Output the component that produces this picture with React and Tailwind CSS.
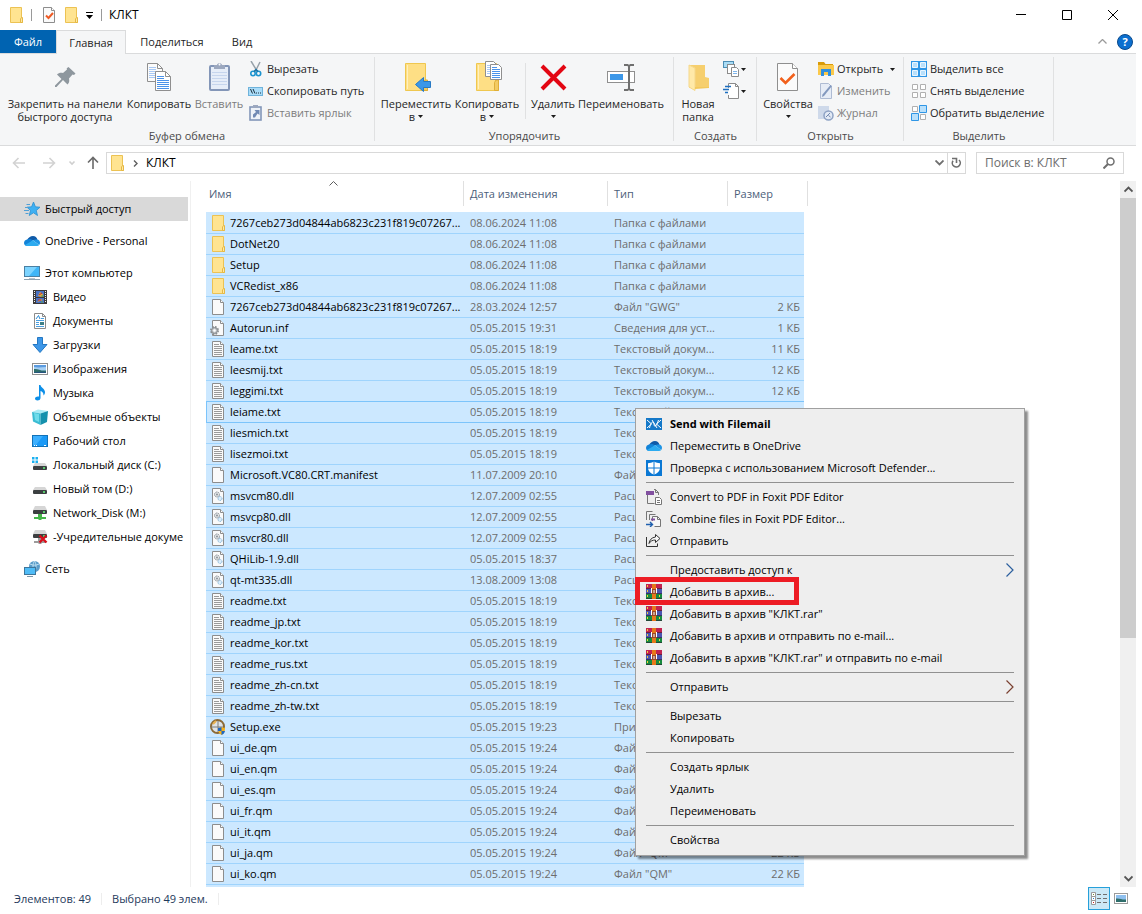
import { useState } from 'react';

const Svg = ({ size = 16, className = '', children }) => (
  <svg width={size} height={size} viewBox={`0 0 ${size} ${size}`} fill="none" aria-hidden="true" className={`shrink-0 ${className}`}>
    {children}
  </svg>
);

/* ---------- file icons ---------- */

const FolderIcon = () => (
  <Svg>
    <path d="M2.500 .5h11v11h1v4h-12z" fill="#ffe491" stroke="#ecc253" />
    <path d="M12.500 15.500v-3.500l1-1.500h1v5z" fill="#ffe9a6" stroke="#e5b844" />
  </Svg>
);

const Page = ({ children }) => (
  <Svg>
    <path d="M2.500 .5h8l3 3v12h-11z" fill="#fafafa" stroke="#8d8d8d" />
    <path d="M10.500 .5v3h3" fill="#fff" stroke="#8d8d8d" />
    {children}
  </Svg>
);

const FileIcon = () => <Page />;

const TextIcon = () => (
  <Page>
    <path d="M4 3.500h5M4 5.500h8M4 7.500h8M4 9.500h8M4 11.500h8M4 13.500h8" stroke="#9a9a9a" />
  </Page>
);

const InfIcon = () => (
  <Page>
    <circle cx="4.500" cy="10.500" r="3.500" fill="#c9cdd0" stroke="#8a8e91" strokeWidth="2" strokeDasharray="1.600 1.150" />
    <circle cx="4.500" cy="10.500" r="2.800" fill="#c9cdd0" stroke="#8a8e91" />
    <circle cx="4.500" cy="10.500" r="1.200" fill="#fff" />
  </Page>
);

const DllIcon = () => (
  <Page>
    <circle cx="7" cy="6.500" r="2.500" fill="#e3e6e8" stroke="#8b9297" strokeDasharray="1.500 .6" />
    <circle cx="7" cy="6.500" r="1" fill="#8b9297" />
    <circle cx="10" cy="10.500" r="2" fill="#dceefb" stroke="#7fb2d6" strokeDasharray="1.200 .6" />
  </Page>
);

const SetupIcon = () => (
  <Svg>
    <circle cx="7.500" cy="7.500" r="6.500" fill="#dfe3e6" stroke="#8c6a37" strokeWidth="2" />
    <path d="M1 8h12M8 2v11" stroke="#7c7c7c" />
    <path d="M3 5l3-3" stroke="#e9b04e" strokeWidth="2" />
    <path d="M8 9c2 0 3-1 3.500-1s1.500 1 3.500 1c0 4-1.500 6-3.500 7-2-1-3.500-3-3.500-7z" fill="#f6b21b" />
    <path d="M11.500 8v4H8c0-1 0-2 0-3 2 0 3-1 3.500-1zM11.500 12H15c-.5 2-1.500 3.300-3.500 4z" fill="#1f66c1" />
  </Svg>
);

/* ---------- sidebar icons ---------- */

const StarIcon = () => (
  <Svg>
    <path d="M9.500 1l1.900 4.800 4.600.4-3.700 3.300 1.200 5-4-2.700-4.300 2.700 1.300-5-3.500-3.300 4.600-.4z" fill="#3fb0f2" stroke="#2b8fd0" strokeWidth=".8" />
    <path d="M2.500 3.500H6M1 6.500h3M0 9.500h5M1.500 12.500h3" stroke="#4f9fd6" />
  </Svg>
);

const CloudIcon = () => (
  <Svg>
    <path d="M3 7.500C4 4.500 6.500 3 9 3c2.200 0 4 1.500 4.500 4z" fill="#0f5aa8" />
    <path d="M3 6.500c2-1.200 4.500-.5 6 .8L3.500 13C1.500 13 0 11.800 0 10c0-2 1.500-3.200 3-3.500z" fill="#1283d8" />
    <path d="M13 6.500c1.800.2 3 1.500 3 3.300 0 1-.3 1.700-.8 2.200L9 7.300c1-.8 2.500-1 4-.8z" fill="#1d94e5" />
    <path d="M9 7.300l6.200 4.700c-.5.600-1.200 1-2.200 1H3.500c-1 0-1.900-.4-2.500-1z" fill="#2cabf0" />
  </Svg>
);

const ComputerIcon = () => (
  <Svg>
    <rect x=".5" y="1.500" width="15" height="10" fill="#3fb6f8" stroke="#4a80a3" />
    <path d="M1 2h12l-8 9H1z" fill="#7dd4ff" />
    <path d="M5 13.500h6" stroke="#b6c4cf" />
    <path d="M0 14.500h16" stroke="#8fa3b1" />
  </Svg>
);

const VideoIcon = () => (
  <Svg>
    <rect x="1" y="1" width="14" height="14" fill="#3d3a3a" />
    <path d="M2.500 2v12M13.500 2v12" stroke="#f2f2f2" strokeDasharray="1 1" />
    <rect x="4" y="2" width="8" height="6" fill="#4a72c4" />
    <rect x="4" y="9" width="8" height="5" fill="#4a72c4" />
    <path d="M6 7l2-4 3 2-1 3zM5 13l3-3 3 1" fill="#e8a33a" />
    <path d="M7 6l3-2M6 11h3" stroke="#b5323a" />
    <path d="M9 7h3M9 13h2" stroke="#58a846" />
  </Svg>
);

const DocumentsIcon = () => (
  <Svg>
    <path d="M2.500 .5h8l3 3v12h-11z" fill="#fff" stroke="#8b8b8b" />
    <path d="M10.500 .5v3h3" stroke="#8b8b8b" />
    <path d="M4 6l2.500-3.500L8 6" stroke="#2a8ad4" />
    <path d="M4 7.500h8M4 9.500h3M4 11.500h3M4 13.500h8M9 5.500h3" stroke="#4a9fe0" />
    <rect x="8" y="9" width="4" height="3" fill="#3f7f86" />
  </Svg>
);

const DownloadsIcon = () => (
  <Svg>
    <path d="M5.500 .5h5v7h4.500L8 15.500 1 7.500h4.500z" fill="#3d97e8" stroke="#2377c2" />
  </Svg>
);

const PictureIcon = () => (
  <Svg>
    <rect x=".5" y="2.500" width="15" height="11" fill="#fff" stroke="#8f8f8f" />
    <rect x="2" y="4" width="12" height="8" fill="#a7d0f4" />
    <path d="M2 4h12v2c-4 0-7 1-12 0z" fill="#5b9be0" />
    <path d="M2 8c4-.5 6 2 12 1.500V12H2z" fill="#2f6e6b" />
    <path d="M2 11.500c4-1 8-1 12-.5v1H2z" fill="#27547f" />
  </Svg>
);

const MusicIcon = () => (
  <Svg>
    <path d="M7 0h1.500c.3 2.500 4.500 3.800 4.500 7 0 1.500-.5 2.800-1.500 3.500.3-2.500-1.300-4-3-4.500v7c0 1.700-1.500 2.500-3 2.500S3 14.700 3 13.500 4.500 11 7 11.500z" fill="#0c8fe8" />
  </Svg>
);

const CubeIcon = () => (
  <Svg>
    <path d="M0 3l6-2.500 10 1.500-7.500 2.500z" fill="#a8ebf5" />
    <path d="M0 3l8.500 1.500V16L1 12.500z" fill="#3bbcd3" />
    <path d="M8.500 4.500L16 2l-1 11-6.500 3z" fill="#1591ad" />
    <path d="M2 4l5 1v8l-4-2z" fill="#6fdcea" />
  </Svg>
);

const DesktopIcon = () => (
  <Svg>
    <rect x=".5" y="2.500" width="15" height="11" fill="#1b9af7" stroke="#1272b8" />
    <path d="M1 3h10L4 12H1z" fill="#3db0ff" />
    <path d="M2 12.500h1M4 12.500h1M12 12.500h2" stroke="#fff" />
  </Svg>
);

const Drive = ({ children }) => (
  <Svg>
    <path d="M3 6h10l2 3H1z" fill="#d6d6d6" />
    <rect x="1" y="9" width="14" height="4" rx="1" fill="#3c3f41" />
    <rect x="11" y="10" width="2" height="2" fill="#57c86b" />
    {children}
  </Svg>
);

const SystemDriveIcon = () => (
  <Drive>
    <path d="M0 0h2.500v2.500H0zM3.500 0H6v2.500H3.500zM0 3.500h2.500V6H0zM3.500 3.500H6V6H3.500z" fill="#1bb0f0" />
  </Drive>
);

const NetDrive = ({ children, pipe }) => (
  <Svg>
    <path d="M3 1h10l2 4H1z" fill="#d6d6d6" />
    <rect x="1" y="5" width="14" height="4" rx="1" fill="#3c3f41" />
    <rect x="11" y="6" width="2" height="2" fill="#57c86b" />
    <path d="M6 9h4v3h4v2h-4l-1 1H7l-1-1H2v-2h4z" fill={pipe} />
    {children}
  </Svg>
);

const NetDriveIcon = () => <NetDrive pipe="#45b649" />;

const BrokenDriveIcon = () => (
  <NetDrive pipe="#9c9c9c">
    <path d="M7.500 6.500l7 7M14.500 6.500l-7 7" stroke="#d80f1b" strokeWidth="2.400" />
  </NetDrive>
);

const NetworkIcon = () => (
  <Svg>
    <circle cx="10.500" cy="5.500" r="5.500" fill="#5b9cc9" />
    <path d="M6 3c3 1.500 6 1.500 9 0M10.500 0c-2 3-2 7 0 11M10.500 0c2 3 2 7 0 11" stroke="#bfe0f2" />
    <rect x=".5" y="6.500" width="11" height="7" fill="#4fbcf7" stroke="#3e769b" />
    <path d="M3 15.500h6" stroke="#7d97a8" />
  </Svg>
);

/* ---------- ribbon icons ---------- */

const PinIcon = () => (
  <Svg size={32}>
    <path d="M19.500 6l7 6.500-1.500 1.500-1.500-.5-3.500 4c.6 2.500.2 4.500-1.500 6L14 19l-6.500 7H6v-1.500L12.500 18 8 13.500c1.500-1.500 3.500-2 6-1.500l4-3.500-.3-1.300z" fill="#8e979e" />
  </Svg>
);

const CopyIcon = () => (
  <Svg size={32}>
    <path d="M4.500 2.500h10l5 5v13h-15z" fill="#fbfbfb" stroke="#8f8f8f" />
    <path d="M14.500 2.500v5h5" stroke="#8f8f8f" />
    <path d="M6 6.500h7M6 8.500h7M6 10.500h11M6 12.500h11M6 14.500h11M6 16.500h11" stroke="#a8c9f5" />
    <path d="M12.500 10.500h10l5 5v14h-15z" fill="#fff" stroke="#8f8f8f" />
    <path d="M22.500 10.500v5h5" stroke="#8f8f8f" />
    <path d="M14 15.500h7M14 17.500h7M14 19.500h12M14 21.500h12M14 23.500h12M14 25.500h12M14 27.500h12" stroke="#4b93ea" />
  </Svg>
);

const PasteIcon = () => (
  <Svg size={32}>
    <rect x="7" y="5" width="19" height="24" rx="1" fill="#e6edf8" stroke="#8396b8" strokeWidth="2" />
    <path d="M9 11.500h15M9 14.500h15M9 17.500h15M9 20.500h15M9 23.500h15" stroke="#c6d5ed" />
    <path d="M11 4h3c0-2.500 5-2.500 5 0h3v4H11z" fill="#9ca8bf" />
    <circle cx="16.500" cy="3.500" r="1" fill="#fff" />
  </Svg>
);

const ScissorsIcon = () => (
  <Svg>
    <path d="M3 0l6 10M12 1L7 11" stroke="#98a2aa" strokeWidth="1.500" />
    <circle cx="5" cy="12.500" r="2.200" stroke="#1c94cf" strokeWidth="1.600" />
    <circle cx="10.500" cy="12.500" r="2.200" stroke="#1c94cf" strokeWidth="1.600" />
    <path d="M6 10.500l2-2 2 2" stroke="#1672a5" strokeWidth="1.500" />
  </Svg>
);

const PathIcon = () => (
  <Svg>
    <rect x=".5" y="4.500" width="14" height="8" fill="#a9dcf9" stroke="#6fb3db" />
    <path d="M2.500 6l2 4.500M5 6l2 4.500" stroke="#1b2f3d" />
    <path d="M8 10h1M10 10h1M12 10h1" stroke="#1b2f3d" />
  </Svg>
);

const PasteLinkIcon = () => (
  <Svg>
    <rect x="2" y="2" width="11" height="13" fill="#eef2f8" stroke="#8396b8" strokeWidth="1.600" />
    <rect x="5" y="0" width="5" height="3" fill="#9ca8bf" />
    <path d="M5 12.500V9.500L8 7 6.500 5H11.500V10L9.500 8.500 7 12.500z" fill="#7089b3" />
  </Svg>
);

const BigFolder = () => (
  <>
    <path d="M5.500 2.500h20v17h2v10h-22z" fill="#fedf85" stroke="#efc74f" />
    <path d="M7.500 4v24" stroke="#fff0bd" />
    <path d="M23.500 29.500v-8l1.500-2.500h2.500v10.500z" fill="#f3cb63" stroke="#dfae38" />
  </>
);

const MoveToIcon = () => (
  <Svg size={32}>
    <BigFolder />
    <path d="M15.500 23.500l8-7v4h7v6h-7v4z" fill="#3c97e8" stroke="#2779c4" />
  </Svg>
);

const CopyToIcon = () => (
  <Svg size={32}>
    <BigFolder />
    <path d="M14.500 .5h8l3 3v12h-11z" fill="#fff" stroke="#8f8f8f" />
    <path d="M16 4.500h5M16 6.500h5M16 8.500h5M16 10.500h5M16 12.500h5" stroke="#a8c9f5" />
    <path d="M19.500 3.500h8l3 3v12h-11z" fill="#fff" stroke="#8f8f8f" />
    <path d="M21 6.500h5M21 8.500h8M21 10.500h8M21 12.500h8M21 14.500h8M21 16.500h8" stroke="#4b93ea" />
  </Svg>
);

const DeleteIcon = () => (
  <Svg size={32}>
    <path d="M5 5l23 23M28 5L5 28" stroke="#e30613" strokeWidth="4" />
  </Svg>
);

const RenameIcon = () => (
  <Svg size={32}>
    <rect x="2.500" y="10.500" width="27" height="11" fill="#fff" stroke="#8f8f8f" />
    <rect x="5" y="13" width="13" height="6" fill="#3c97e8" />
    <path d="M19 4h3.500l1.500 1 1.500-1H29M19 29h3.500l1.500-1 1.500 1H29M24 5v23" stroke="#6f6f6f" strokeWidth="2" />
  </Svg>
);

const NewFolderIcon = () => (
  <Svg size={32}>
    <path d="M7 4h16v12l4 1v9l-3 1H7z" fill="#f6cf6e" />
    <path d="M7 4l6 3v22.500L7 26z" fill="#ffe9a8" stroke="#f5d88b" />
    <path d="M13 26h14v1l-14 1z" fill="#f3c85c" />
  </Svg>
);

const NewItemIcon = () => (
  <Svg>
    <rect x=".5" y=".5" width="10" height="6" fill="#a9dcf5" stroke="#4c8db4" />
    <rect x="4.500" y="3.500" width="7" height="9" fill="#fff" stroke="#8b8b8b" />
    <path d="M8.500 6.500h5l2 2v7h-7z" fill="#fff" stroke="#8b8b8b" />
    <path d="M10 10.500h4M10 12.500h4" stroke="#7db4ea" />
  </Svg>
);

const EasyAccessIcon = () => (
  <Svg>
    <path d="M5.500 5V.5h7l3 3v12h-10V12" fill="#fff" stroke="#8b8b8b" />
    <path d="M12.500 .5v3h3" stroke="#8b8b8b" />
    <path d="M2 3.500h6M0 6.500h6M2 9.500h3" stroke="#1e6fc0" strokeWidth="1.500" />
  </Svg>
);

const PropertiesIcon = () => (
  <Svg size={32}>
    <path d="M5.500 2.500h15l5 5v22h-20z" fill="#fbfbfb" stroke="#8f8f8f" />
    <path d="M20.500 2.500v5h5" fill="#fff" stroke="#8f8f8f" />
    <path d="M8.500 17l5 5 9-9" stroke="#f2611c" strokeWidth="2.600" />
  </Svg>
);

const OpenIcon = () => (
  <Svg>
    <path d="M0 1h6l1.500 2H15v3H0z" fill="#d99b08" />
    <path d="M0 4h16v10H0z" fill="#fbc94b" />
    <path d="M3 15V8h10v7h-3v-4H6v4z" fill="#2f8fe0" />
  </Svg>
);

const EditIcon = () => (
  <Svg>
    <path d="M2.500 .5h8l3 3v12h-11z" fill="#e6ecf6" stroke="#aebbd3" />
    <path d="M14 3l-8 10-2 1 .5-2.500 8-9.500z" fill="#8298be" />
  </Svg>
);

const HistoryIcon = () => (
  <Svg>
    <path d="M0 1h11v13H0z" fill="#ced9ea" />
    <circle cx="10.500" cy="10.500" r="4.500" fill="#e3eaf5" stroke="#8ea2c4" strokeWidth="1.500" />
    <path d="M8 12l4-4M10.500 10.500l2 1.500" stroke="#7087ae" />
  </Svg>
);

const SelectAllIcon = () => (
  <Svg>
    <rect width="16" height="16" fill="#2f96e6" />
    <path d="M1.500 1.500h5v5h-5zM9.500 1.500h5v5h-5zM1.500 9.500h5v5h-5zM9.500 9.500h5v5h-5z" fill="#b9e0fb" stroke="#eaf6ff" />
  </Svg>
);

const SelectNoneIcon = () => (
  <Svg>
    <path d="M1.500 1.500h5v5h-5zM9.500 1.500h5v5h-5zM1.500 9.500h5v5h-5zM9.500 9.500h5v5h-5z" fill="#fff" stroke="#b0b0b0" />
  </Svg>
);

const InvertIcon = () => (
  <Svg>
    <path d="M1.500 1.500h5v5h-5zM9.500 9.500h5v5h-5z" fill="#fff" stroke="#b0b0b0" />
    <path d="M8.500 .5h7v7h-7zM.5 8.500h7v7h-7z" fill="#b9e0fb" stroke="#2f96e6" />
  </Svg>
);

const TickPageIcon = () => (
  <Page>
    <path d="M5 8.500l2.500 2.500L12 6" stroke="#ee5a24" strokeWidth="2" />
  </Page>
);

const Caret = () => (
  <svg width="5" height="3" viewBox="0 0 5 3" aria-hidden="true" className="inline-block shrink-0">
    <path d="M0 0h5L2.500 3z" fill="#1c1c1c" />
  </svg>
);

/* ---------- context menu icons ---------- */

const FilemailIcon = () => (
  <Svg>
    <rect y="2" width="16" height="12" fill="#1478c8" />
    <path d="M1 4l4.500 4L1 12M15 4l-4.500 4 4.500 4" stroke="#fff" />
    <path d="M3.500 12c1.500-6 4-8 4.500-4s2 3 4.500-4M6 4l5 8" stroke="#fff" />
  </Svg>
);

const DefenderIcon = () => (
  <Svg>
    <rect width="16" height="16" fill="#0a78d4" />
    <path d="M8 1.500c2 1.200 4 1.700 6 1.700V8c0 3-2.500 5.200-6 6.700C4.500 13.200 2 11 2 8V3.200c2 0 4-.5 6-1.700z" fill="#fff" />
    <path d="M8 1v14M1 8h14" stroke="#0a78d4" />
  </Svg>
);

const ConvertIcon = () => (
  <Svg>
    <path d="M1.500 6v8.500h7M8 .5h1.500l3 3V6" stroke="#767676" />
    <rect y="2" width="8" height="4" fill="#8250a0" />
    <path d="M9.500 .5v3h3" stroke="#767676" />
    <path d="M9.500 8.500h4l2 2v5h-6z" fill="#fff" stroke="#767676" />
    <path d="M11 11.500h3M11 13.500h3" stroke="#767676" />
  </Svg>
);

const CombineIcon = () => (
  <Svg>
    <path d="M.5 9V.5h6M3.500 9V3.500h6" stroke="#767676" />
    <path d="M6.500 10V5.500h5l3 3v7h-6" fill="#f7f7f7" stroke="#767676" />
    <path d="M11.500 5.500v3h3" stroke="#767676" />
    <path d="M5 8.500h4" stroke="#8250a0" strokeWidth="2" />
    <path d="M0 13.500h6M4 11l2.500 2.500L4 16" stroke="#1f5fae" strokeWidth="1.400" />
  </Svg>
);

const ShareIcon = () => (
  <Svg>
    <path d="M.5 4v9.500h11v-3" stroke="#333" />
    <path d="M9.500 1.500l4.500 4-4.500 4V7c-3 0-5 1-6.500 3.500C3.500 7 5.500 4.500 9.500 4z" fill="#f8f8f8" stroke="#333" />
  </Svg>
);

const RarIcon = () => (
  <Svg>
    <rect y="0" width="16" height="5" fill="#c22350" />
    <rect y="5" width="16" height="5" fill="#4a55b0" />
    <rect y="10" width="16" height="5" fill="#178a3d" />
    <path d="M0 4.500h16M0 9.500h16M0 14.500h16" stroke="#2b1d33" strokeOpacity=".6" />
    <path d="M1.500 1v2M1.500 6v2M1.500 11v2M13.500 11v2" stroke="#f1cf3b" />
    <rect x="6" width="4" height="15" fill="#e8781a" />
    <rect x="5" y="5" width="6" height="5" fill="#9a4a2a" />
    <path d="M5.500 4v5M8 6v3M10.500 4v5" stroke="#fff" />
  </Svg>
);

/* ---------- data ---------- */

const FOLDER = 'Папка с файлами';
const TXT = 'Текстовый докум...';
const DLL = 'Расширение при...';
const QM = 'Файл "QM"';

const files = [
  ['7267ceb273d04844ab6823c231f819c07267...', '08.06.2024 11:08', FOLDER, '', FolderIcon],
  ['DotNet20', '08.06.2024 11:08', FOLDER, '', FolderIcon],
  ['Setup', '08.06.2024 11:08', FOLDER, '', FolderIcon],
  ['VCRedist_x86', '08.06.2024 11:08', FOLDER, '', FolderIcon],
  ['7267ceb273d04844ab6823c231f819c07267...', '28.03.2024 12:57', 'Файл "GWG"', '2 КБ', FileIcon],
  ['Autorun.inf', '05.05.2015 19:31', 'Сведения для уст...', '1 КБ', InfIcon],
  ['leame.txt', '05.05.2015 18:19', TXT, '11 КБ', TextIcon],
  ['leesmij.txt', '05.05.2015 18:19', TXT, '12 КБ', TextIcon],
  ['leggimi.txt', '05.05.2015 18:19', TXT, '12 КБ', TextIcon],
  ['leiame.txt', '05.05.2015 18:19', TXT, '11 КБ', TextIcon],
  ['liesmich.txt', '05.05.2015 18:19', TXT, '12 КБ', TextIcon],
  ['lisezmoi.txt', '05.05.2015 18:19', TXT, '12 КБ', TextIcon],
  ['Microsoft.VC80.CRT.manifest', '11.07.2009 20:10', 'Файл "MANIFEST"', '1 КБ', FileIcon],
  ['msvcm80.dll', '12.07.2009 02:55', DLL, '468 КБ', DllIcon],
  ['msvcp80.dll', '12.07.2009 02:55', DLL, '536 КБ', DllIcon],
  ['msvcr80.dll', '12.07.2009 02:55', DLL, '612 КБ', DllIcon],
  ['QHiLib-1.9.dll', '05.05.2015 18:37', DLL, '320 КБ', DllIcon],
  ['qt-mt335.dll', '13.08.2009 13:08', DLL, '5 120 КБ', DllIcon],
  ['readme.txt', '05.05.2015 18:19', TXT, '11 КБ', TextIcon],
  ['readme_jp.txt', '05.05.2015 18:19', TXT, '12 КБ', TextIcon],
  ['readme_kor.txt', '05.05.2015 18:19', TXT, '12 КБ', TextIcon],
  ['readme_rus.txt', '05.05.2015 18:19', TXT, '12 КБ', TextIcon],
  ['readme_zh-cn.txt', '05.05.2015 18:19', TXT, '10 КБ', TextIcon],
  ['readme_zh-tw.txt', '05.05.2015 18:19', TXT, '10 КБ', TextIcon],
  ['Setup.exe', '05.05.2015 19:23', 'Приложение', '900 КБ', SetupIcon],
  ['ui_de.qm', '05.05.2015 19:24', QM, '22 КБ', FileIcon],
  ['ui_en.qm', '05.05.2015 19:24', QM, '22 КБ', FileIcon],
  ['ui_es.qm', '05.05.2015 19:24', QM, '22 КБ', FileIcon],
  ['ui_fr.qm', '05.05.2015 19:24', QM, '22 КБ', FileIcon],
  ['ui_it.qm', '05.05.2015 19:24', QM, '22 КБ', FileIcon],
  ['ui_ja.qm', '05.05.2015 19:24', QM, '22 КБ', FileIcon],
  ['ui_ko.qm', '05.05.2015 19:24', QM, '22 КБ', FileIcon],
  ['', '', '', '', FileIcon],
];

const sidebar = [
  { label: 'Быстрый доступ', icon: StarIcon, active: true },
  { label: 'OneDrive - Personal', icon: CloudIcon },
  {
    label: 'Этот компьютер',
    icon: ComputerIcon,
    children: [
      ['Видео', VideoIcon],
      ['Документы', DocumentsIcon],
      ['Загрузки', DownloadsIcon],
      ['Изображения', PictureIcon],
      ['Музыка', MusicIcon],
      ['Объемные объекты', CubeIcon],
      ['Рабочий стол', DesktopIcon],
      ['Локальный диск (C:)', SystemDriveIcon],
      ['Новый том (D:)', Drive],
      ['Network_Disk (M:)', NetDriveIcon],
      ['-Учредительные докуме', BrokenDriveIcon],
    ],
  },
  { label: 'Сеть', icon: NetworkIcon },
];

const menu = [
  [
    { label: 'Send with Filemail', icon: FilemailIcon, bold: true },
    { label: 'Переместить в OneDrive', icon: CloudIcon },
    { label: 'Проверка с использованием Microsoft Defender...', icon: DefenderIcon },
  ],
  [
    { label: 'Convert to PDF in Foxit PDF Editor', icon: ConvertIcon },
    { label: 'Combine files in Foxit PDF Editor...', icon: CombineIcon },
    { label: 'Отправить', icon: ShareIcon },
  ],
  [
    { label: 'Предоставить доступ к', sub: '#2b5f9e' },
    { label: 'Добавить в архив...', icon: RarIcon, marked: true },
    { label: 'Добавить в архив "КЛКТ.rar"', icon: RarIcon },
    { label: 'Добавить в архив и отправить по e-mail...', icon: RarIcon },
    { label: 'Добавить в архив "КЛКТ.rar" и отправить по e-mail', icon: RarIcon },
  ],
  [{ label: 'Отправить', sub: '#7a4030' }],
  [{ label: 'Вырезать' }, { label: 'Копировать' }],
  [{ label: 'Создать ярлык' }, { label: 'Удалить' }, { label: 'Переименовать' }],
  [{ label: 'Свойства' }],
];

/* ---------- parts ---------- */

const TitleBar = () => (
  <header className="flex h-[30px] shrink-0 items-center pl-2">
    <FolderIcon />
    <span className="ml-[7px] h-3 w-px bg-[#9a9a9a]" />
    <button type="button" aria-label="Свойства" className="ml-[9px]"><TickPageIcon /></button>
    <button type="button" aria-label="Новая папка" className="ml-[6px]"><FolderIcon /></button>
    <button type="button" aria-label="Настройка панели" className="ml-[7px] flex w-[7px] flex-col items-center gap-[2px]">
      <span className="h-px w-[7px] bg-black" />
      <svg width="7" height="4" viewBox="0 0 7 4" aria-hidden="true"><path d="M0 0h7L3.500 4z" fill="#000" /></svg>
    </button>
    <span className="ml-2 h-3 w-px bg-[#9a9a9a]" />
    <h1 className="ml-[7px] flex-1 text-[12px] text-black">КЛКТ</h1>
    <button type="button" aria-label="Свернуть" className="flex w-[46px] justify-center">
      <svg width="10" height="10" viewBox="0 0 10 10"><path d="M0 4.500h10" stroke="#000" /></svg>
    </button>
    <button type="button" aria-label="Развернуть" className="flex w-[46px] justify-center">
      <svg width="10" height="10" viewBox="0 0 10 10" fill="none"><path d="M.5 .5h9v9h-9z" stroke="#000" /></svg>
    </button>
    <button type="button" aria-label="Закрыть" className="flex w-[46px] justify-center">
      <svg width="10" height="10" viewBox="0 0 10 10"><path d="M0 0l10 10M10 0L0 10" stroke="#000" /></svg>
    </button>
  </header>
);

const Tabs = () => (
  <nav className="flex h-6 shrink-0 border-b border-[#dadbdc] text-[#1f1f1f]">
    <button type="button" className="w-14 bg-[#0063b1] text-white">Файл</button>
    <button type="button" className="-mb-px w-[70px] border border-b-0 border-[#dadbdc] bg-[#f5f6f7]">Главная</button>
    <button type="button" className="w-[92px]">Поделиться</button>
    <button type="button" className="w-12">Вид</button>
    <span className="flex-1" />
    <button type="button" aria-label="Свернуть ленту" className="mr-[10px]">
      <svg width="9" height="5" viewBox="0 0 9 5" fill="none"><path d="M.5 4.500l4-4 4 4" stroke="#9b9b9b" strokeWidth="1.300" /></svg>
    </button>
    <button type="button" aria-label="Справка" className="mr-[3px] flex h-4 w-4 items-center justify-center self-center rounded-full border border-[#0b4a8c] bg-[#0c6fcf] font-bold text-white">?</button>
  </nav>
);

const BigButton = ({ icon: Icon, lines, caret, disabled, width }) => (
  <button type="button" disabled={disabled} className={`flex shrink-0 flex-col items-center pt-[3px] leading-[13px] whitespace-nowrap disabled:text-[#7d7d7d] ${width}`}>
    <Icon />
    <span className="h-1" />
    {lines.map((line, i) => (
      <span key={line} className="flex items-center gap-[3px]">
        {line}
        {caret && i === 1 && <Caret />}
      </span>
    ))}
    {caret && lines.length === 1 && <span className="flex h-[13px] items-center"><Caret /></span>}
  </button>
);

const SmallButton = ({ icon: Icon, label, name, caret, disabled }) => (
  <button type="button" disabled={disabled} aria-label={name} className="flex h-[22px] items-center gap-[3px] whitespace-nowrap disabled:text-[#7d7d7d]">
    <Icon />
    {label && <span>{label}</span>}
    {caret && <span className={label ? 'ml-1 flex' : '-ml-px flex'}><Caret /></span>}
  </button>
);

const Group = ({ label, width, children }) => (
  <section className={`flex shrink-0 border-r border-transparent ${width}`}>
    <div className="flex min-w-0 flex-1 flex-col pt-1">
      <div className="flex h-[66px]">{children}</div>
      <h2 className="mt-1 h-4 text-center leading-4 text-[#4a4a4a]">{label}</h2>
    </div>
    <span className="my-[3px] w-px bg-[#e0e1e2]" />
  </section>
);

const Ribbon = () => (
  <div className="flex shrink-0 overflow-hidden border-b border-[#dadbdc] bg-[#f5f6f7] pb-px text-[#262626]">
    <Group label="Буфер обмена" width="w-[376px]">
      <span className="w-[5px]" />
      <BigButton icon={PinIcon} lines={['Закрепить на панели', 'быстрого доступа']} width="w-[120px]" />
      <BigButton icon={CopyIcon} lines={['Копировать']} width="w-[68px]" />
      <BigButton icon={PasteIcon} lines={['Вставить']} width="w-[52px]" disabled />
      <div className="ml-[3px]">
        <SmallButton icon={ScissorsIcon} label="Вырезать" />
        <SmallButton icon={PathIcon} label="Скопировать путь" />
        <SmallButton icon={PasteLinkIcon} label="Вставить ярлык" disabled />
      </div>
    </Group>
    <Group label="Упорядочить" width="w-[299px]">
      <span className="w-[2px]" />
      <BigButton icon={MoveToIcon} lines={['Переместить', 'в']} width="w-[76px]" caret />
      <BigButton icon={CopyToIcon} lines={['Копировать', 'в']} width="w-[66px]" caret />
      <span className="mx-[5px] mt-[5px] h-14 w-px bg-[#e0e1e2]" />
      <BigButton icon={DeleteIcon} lines={['Удалить']} width="w-[44px]" caret />
      <BigButton icon={RenameIcon} lines={['Переименовать']} width="w-[92px]" />
    </Group>
    <Group label="Создать" width="w-[83px]">
      <span className="w-1" />
      <BigButton icon={NewFolderIcon} lines={['Новая', 'папка']} width="w-[38px]" />
      <div className="ml-[6px]">
        <SmallButton icon={NewItemIcon} name="Создать элемент" caret />
        <SmallButton icon={EasyAccessIcon} name="Простой доступ" caret />
      </div>
    </Group>
    <Group label="Открыть" width="w-[147px]">
      <span className="w-[2px]" />
      <BigButton icon={PropertiesIcon} lines={['Свойства']} width="w-[56px]" caret />
      <div className="ml-[2px]">
        <SmallButton icon={OpenIcon} label="Открыть" caret />
        <SmallButton icon={EditIcon} label="Изменить" disabled />
        <SmallButton icon={HistoryIcon} label="Журнал" disabled />
      </div>
    </Group>
    <Group label="Выделить" width="w-[150px]">
      <div className="ml-[6px]">
        <SmallButton icon={SelectAllIcon} label="Выделить все" />
        <SmallButton icon={SelectNoneIcon} label="Снять выделение" />
        <SmallButton icon={InvertIcon} label="Обратить выделение" />
      </div>
    </Group>
  </div>
);

const Arrow = ({ d, color, name, className = '' }) => (
  <button type="button" aria-label={name} className={className}>
    <svg width="14" height="14" viewBox="0 0 14 14" fill="none"><path d={d} stroke={color} strokeWidth="1.600" /></svg>
  </button>
);

const AddressBar = () => {
  const [query, setQuery] = useState('');

  return (
    <div className="flex h-[35px] shrink-0 items-center pr-3 pb-px pl-3 text-[12px]">
      <Arrow name="Назад" d="M13 7H1.500M6.500 2l-5 5 5 5" color="#d2d2d2" />
      <Arrow name="Вперед" d="M1 7h11.500M7.500 2l5 5-5 5" color="#d2d2d2" className="ml-4" />
      <Arrow name="Последние" d="M4.500 5.500L7 8l2.500-2.500" color="#cfcfcf" className="ml-[9px]" />
      <Arrow name="Вверх" d="M7 13V1.500M2 6.500l5-5 5 5" color="#6a6a6a" className="ml-[7px]" />
      <div className="ml-[6px] flex h-[22px] flex-1 items-center border border-[#d9d9d9] pl-[2px] text-black">
        <FolderIcon />
        <svg width="5" height="7" viewBox="0 0 5 7" fill="none" className="ml-2"><path d="M1 .5l3 3-3 3" stroke="#5f5f5f" strokeWidth="1.400" /></svg>
        <button type="button" className="ml-2 flex-1 text-left">КЛКТ</button>
        <button type="button" aria-label="Предыдущие расположения" className="mr-[3px]">
          <svg width="9" height="6" viewBox="0 0 9 6" fill="none"><path d="M.5 .5l4 4 4-4" stroke="#6f6f6f" strokeWidth="1.800" /></svg>
        </button>
        <button type="button" aria-label="Обновить" className="flex h-full w-[18px] items-center justify-center border-l border-[#d9d9d9]">
          <svg width="11" height="12" viewBox="0 0 11 12" fill="none">
            <path d="M1 1.500h4.500V6M8 3a4 4 0 1 1-6 .7" stroke="#6f6f6f" strokeWidth="1.600" />
          </svg>
        </button>
      </div>
      <label className="ml-[10px] flex h-[22px] w-[148px] items-center border border-[#d9d9d9] pr-2 pl-2">
        <input
          type="text"
          value={query}
          onChange={(e) => setQuery(e.target.value)}
          placeholder="Поиск в: КЛКТ"
          aria-label="Поиск"
          className="min-w-0 flex-1 outline-none placeholder:text-[#6d6d6d]"
        />
        <svg width="12" height="12" viewBox="0 0 12 12" fill="none"><circle cx="7.500" cy="4.500" r="3.500" stroke="#6f6f6f" strokeWidth="1.500" /><path d="M5 7l-4.500 4.500" stroke="#6f6f6f" strokeWidth="2" /></svg>
      </label>
    </div>
  );
};

const Sidebar = () => (
  <aside className="w-[191px] shrink-0 overflow-hidden border-r border-[#f0f0f0] pt-4 pr-[2px] text-black">
    <ul className="flex flex-col gap-2">
      {sidebar.map(({ label, icon: Icon, active, children = [] }) => (
        <li key={label}>
          <a href="#" className={`flex h-6 items-center gap-[5px] pl-6 ${active ? 'bg-[#d9d9d9]' : ''}`}>
            <Icon />
            {label}
          </a>
          {children.length > 0 && (
            <ul>
              {children.map(([name, ChildIcon]) => (
                <li key={name}>
                  <a href="#" className="flex h-6 items-center gap-[5px] overflow-hidden pl-8 whitespace-nowrap">
                    <ChildIcon />
                    {name}
                  </a>
                </li>
              ))}
            </ul>
          )}
        </li>
      ))}
    </ul>
  </aside>
);

const FileTable = () => (
  <table className="w-[602px] table-fixed border-separate border-spacing-0 text-left whitespace-nowrap text-[#6d6d6d]">
    <colgroup>
      <col className="w-[258px]" />
      <col className="w-[144px]" />
      <col className="w-[120px]" />
      <col className="w-[76px]" />
      <col className="w-1" />
    </colgroup>
    <thead>
      <tr className="text-[#4c607a]">
        {['Имя', 'Дата изменения', 'Тип', 'Размер'].map((title, i) => (
          <th key={title} scope="col" className="border-b border-[#cce8ff] p-0 pb-[6px] font-normal">
            <div className={`relative flex h-[25px] items-center border-[#e0e0e0] ${i === 0 ? 'pl-[3px]' : 'pl-[6px]'} ${i < 3 ? 'border-r' : ''}`}>
              {title}
              {i === 0 && (
                <svg width="9" height="5" viewBox="0 0 9 5" fill="none" className="absolute top-0 left-[123px]"><path d="M.5 4.500l4-4 4 4" stroke="#5c5c5c" /></svg>
              )}
            </div>
          </th>
        ))}
        <td className="p-0 pb-[7px]"><div className="h-[25px] border-r border-[#e0e0e0]" /></td>
      </tr>
    </thead>
    <tbody>
      {files.map(([name, date, type, size, Icon], i) => {
        const focused = name === 'leiame.txt';
        const line = focused || files[i + 1]?.[0] === 'leiame.txt' ? 'border-[#7cc4fb]' : 'border-[#9fd4fd]';
        const cell = `h-[21px] border-b bg-[#cce8ff] p-0 leading-5 ${line}`;
        return (
          <tr key={i}>
            <td className={cell}>
              <div className={`flex h-5 items-center gap-1 text-black ${focused ? 'border-l border-[#7cc4fb] pl-[3px]' : 'pl-1'}`}>
                <Icon />
                {name}
              </div>
            </td>
            <td className={`${cell} pl-[6px]`}>{date}</td>
            <td className={`${cell} pl-[6px]`}>{type}</td>
            <td className={`${cell} pr-1 text-right`}>{size}</td>
            <td />
          </tr>
        );
      })}
    </tbody>
  </table>
);

const Scrollbar = () => (
  <div className="flex w-4 shrink-0 flex-col items-center bg-[#f0f0f0]">
    <svg width="9" height="17" viewBox="0 0 9 17" fill="none"><path d="M.5 10.500l4-4 4 4" stroke="#555" strokeWidth="1.800" /></svg>
    <div className="h-[440px] w-full bg-[#cdcdcd]" />
    <span className="flex-1" />
    <svg width="9" height="17" viewBox="0 0 9 17" fill="none"><path d="M.5 6.500l4 4 4-4" stroke="#555" strokeWidth="1.800" /></svg>
  </div>
);

const ContextMenu = () => (
  <div role="menu" className="absolute top-[408px] left-[635px] w-[390px] border border-[#a0a0a0] bg-[#eee] py-1 text-black shadow-[3px_3px_2px_rgba(0,0,0,0.45)]">
    {menu.map((items, i) => (
      <div key={i}>
        {i > 0 && <hr className="mx-[10px] my-[3px] border-[#919191]" />}
        {items.map(({ label, icon: Icon, bold, sub, marked }) => (
          <button key={label} type="button" role="menuitem" className="relative flex h-[22px] w-full items-center px-[10px] text-left">
            <span className="mr-2 w-4">{Icon && <Icon />}</span>
            <span className={bold ? 'flex-1 font-bold' : 'flex-1'}>{label}</span>
            {sub && <svg width="8" height="14" viewBox="0 0 8 14" fill="none"><path d="M.5 .5L7 7 .5 13.500" stroke={sub} strokeWidth="1.200" /></svg>}
            {marked && <span className="absolute -top-1 -left-px h-7 w-[164px] border-5 border-[#ed1c24]" />}
          </button>
        ))}
      </div>
    ))}
  </div>
);

const StatusBar = () => (
  <footer className="flex h-[27px] shrink-0 items-start pl-[14px] text-[#1e395b]">
    <span className="flex h-6 items-center">Элементов: 49</span>
    <span className="mt-1.5 ml-[10px] h-3 w-px bg-[#ededed]" />
    <span className="ml-[10px] flex h-6 items-center">Выбрано 49 элем.</span>
    <span className="mt-1.5 ml-[10px] h-3 w-px bg-[#ededed]" />
    <span className="flex-1" />
    <button type="button" aria-label="Таблица" className="flex h-[23px] w-[22px] items-center justify-center border border-[#26a0da] bg-[#cbe8f6]">
      <svg width="16" height="14" viewBox="0 0 16 14" fill="none">
        <path d="M.5 .5h4v4h-4zM.5 4.500h4v4h-4zM.5 8.500h4v4h-4z" fill="#fff" stroke="#9a9a9a" />
        <path d="M2 2.500h1" stroke="#6b8f3a" /><path d="M2 6.500h1" stroke="#2a7fd0" /><path d="M2 10.500h1" stroke="#c22" />
        <path d="M6 2.500h4M12 2.500h4M6 6.500h4M12 6.500h4M6 10.500h4M12 10.500h4" stroke="#6f6f6f" />
      </svg>
    </button>
    <button type="button" aria-label="Крупные значки" className="flex h-[23px] w-[26px] items-center pl-1">
      <svg width="14" height="11" viewBox="0 0 14 11" fill="none">
        <rect x=".5" y=".5" width="13" height="10" fill="#fff" stroke="#9a9a9a" />
        <rect x="2" y="2" width="10" height="7" fill="#8fc0ef" />
        <path d="M2 5.500c4-.5 6 1.500 10 1V9H2z" fill="#2f6e6b" />
      </svg>
    </button>
  </footer>
);

const App = () => (
  <div className="relative flex h-screen min-w-[1060px] flex-col overflow-hidden bg-white pr-1.5 font-['Open_Sans','Noto_Sans',sans-serif] text-[11px] leading-4">
    <TitleBar />
    <Tabs />
    <Ribbon />
    <AddressBar />
    <div className="flex min-h-0 flex-1 overflow-hidden">
      <Sidebar />
      <main className="ml-[15px] min-w-0 flex-1 overflow-hidden">
        <FileTable />
      </main>
      <Scrollbar />
    </div>
    <StatusBar />
    <ContextMenu />
  </div>
);

export default App;
